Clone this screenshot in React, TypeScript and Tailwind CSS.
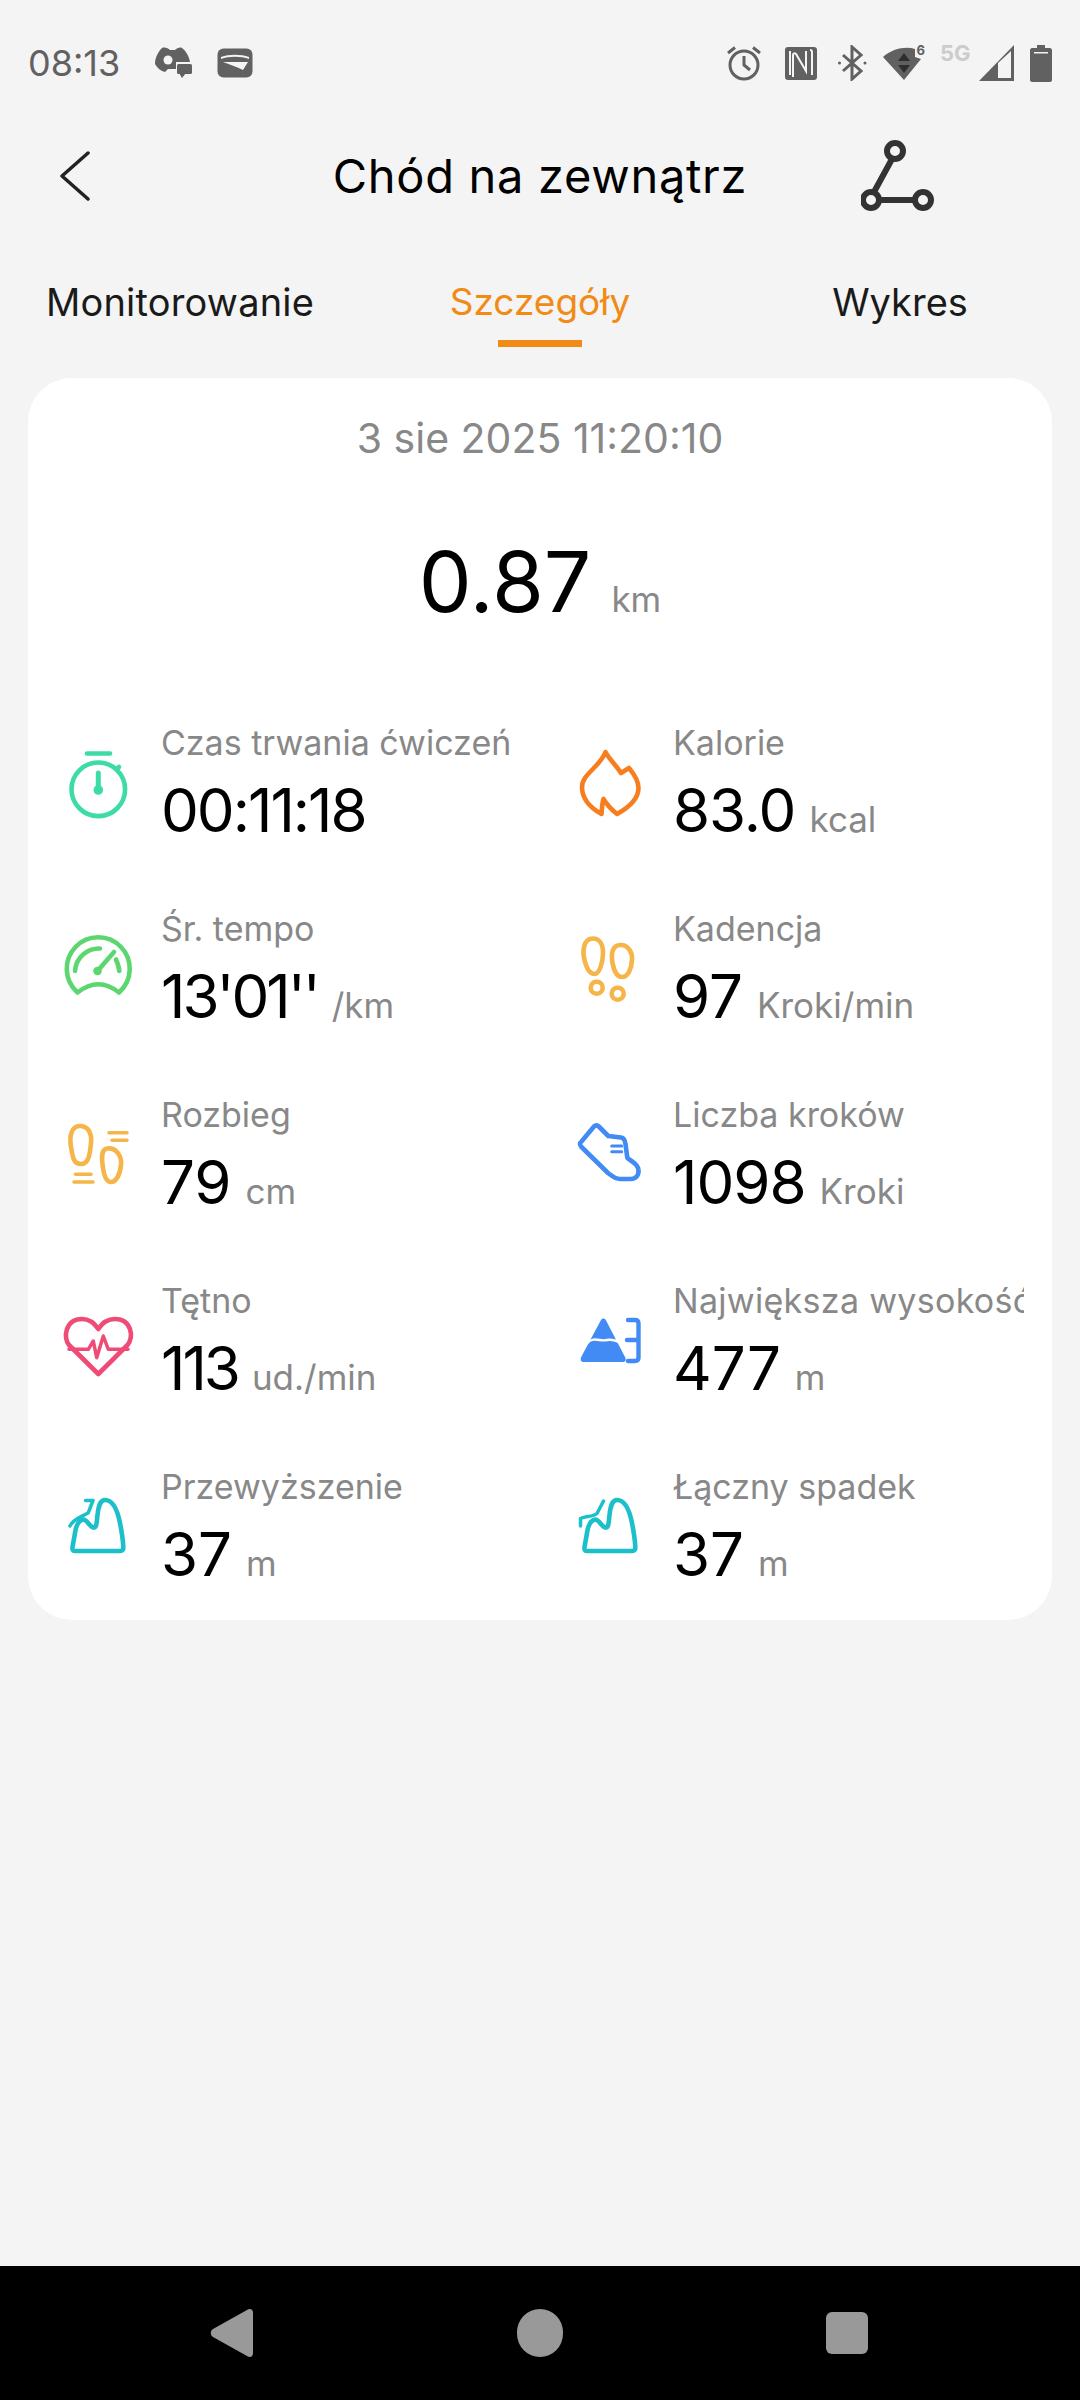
import type { ReactNode } from "react";

const FONT = "[font-family:Inter,'Noto_Sans',sans-serif]";

function Stroke({ color, children }: { color: string; children: ReactNode }) {
  return (
    <svg
      width="72"
      height="72"
      viewBox="0 0 72 72"
      fill="none"
      stroke={color}
      strokeWidth="4.6"
      strokeLinecap="round"
      strokeLinejoin="round"
      className="shrink-0"
    >
      {children}
    </svg>
  );
}

const Stopwatch = () => (
  <Stroke color="#3ddba6">
    <circle cx="36.3" cy="40.3" r="26.8" />
    <path d="M25 4.5H48" />
    <path d="M36.3 24V41" strokeWidth="5" />
    <circle cx="36.3" cy="41" r="2.5" fill="#3ddba6" />
    <path d="M55 20l2-2" />
  </Stroke>
);

const Gauge = () => (
  <Stroke color="#5cd66f">
    <path d="M15.5 57.5A31.5 31.5 0 1 1 57 57.5Q36.5 41 15.5 57.5Z" />
    <path d="M13 36C14 22 26 13 38 13.5" />
    <path d="M54 24.5C55.5 28 57 32 57.3 36" />
    <path d="M35.5 36L52 17" />
    <circle cx="35.5" cy="36" r="2" fill="#5cd66f" />
  </Stroke>
);

const Stride = () => (
  <Stroke color="#f6b549">
    <path d="M18 5C26 5 30 12 29 22C28 32 27 43 19 43C11 43 11 36 9 26C7 14 10 5 18 5Z" />
    <path d="M45 27.5C54 26 60 35 59 44C58 54 54 61 49 61C44 61 42 54 41 47C40 40 38 29 45 27.5Z" />
    <path d="M47 11.7H65M50 19.3H65M13.5 53.3H29M12 61H31" strokeWidth="3.5" />
  </Stroke>
);

const Flame = () => (
  <Stroke color="#f77e1f">
    <path d="M31.5 3C35 10 42 16 47 24L55 19C60 25 64.5 31 64.5 39C64.5 52 52 60 43 65C38 61 33 56 29.5 50C28 54 28 60 27.5 65C15 58 8 50 8 38C8 25 26 18 31.5 3Z" />
  </Stroke>
);

const Cadence = () => (
  <Stroke color="#f6b549">
    <path d="M19 3.5C26 3.5 29 10 29 18C29 26 26 38 21 39C15 39 13 33 11 27C8 17 9 3.5 19 3.5Z" />
    <path d="M46 10C54 9.5 58.5 17 58 25C57.5 34 54 42 48 42C42 42 40 35 38.5 28C37 19 38 10.5 46 10Z" />
    <circle cx="22.7" cy="52.7" r="6" />
    <circle cx="43.7" cy="58.7" r="6" />
  </Stroke>
);

const Shoe = () => (
  <Stroke color="#428bf5">
    <path d="M24.3 5L34.3 15L47 16.5C50 17 51 19 51.5 23L53.3 36.7C56 40 64 42 64.5 49C65 54 62 58 57 58H46C41 58 38 55 34 52L7.5 26C5.5 24 5.5 22 7.5 20.5L20 5.5C21.5 4 23 4 24.3 5Z" />
    <path d="M37.7 25H47.7M37.7 30.7H47.7" strokeWidth="3" />
  </Stroke>
);

const Heart = () => (
  <Stroke color="#ef4b77">
    <path d="M36.3 67L7 38C1 31 3 12 20 12C28 12 33 17 36.3 22C39.5 17 45 12 53 12C70 12 72 31 65.5 38Z" />
    <path d="M7 42.3H26.3L31.3 34L34.7 50.7L41.3 29L46.3 42.3H66" strokeWidth="3.5" />
  </Stroke>
);

const Mountain = () => (
  <path d="M13 58C10.5 58 10.3 56.5 10.5 54L13 40C14 33 17 27 21.5 26.5C25 26.5 27 33 31 34.5C35 35 34.5 30 35.5 22C36.5 13 38 7 43 7C50 7 55 15 58 30C60 40 61 48 61.3 54C61.5 57 60.5 58 58 58Z" />
);

const Ascent = () => (
  <Stroke color="#1cc0cb">
    <Mountain />
    <path d="M8 33C12 25 20 24 26.3 19.7L31 7.5M23.5 7.5H31" strokeWidth="3.5" />
  </Stroke>
);

const Descent = () => (
  <Stroke color="#1cc0cb">
    <Mountain />
    <path d="M29.5 8L23 20.5C19 24 12 23 6.5 25.5M6.5 25.5V33" strokeWidth="3.5" />
  </Stroke>
);

const Peak = () => (
  <svg width="72" height="72" viewBox="0 0 72 72" className="shrink-0">
    <path
      d="M27 13C28.3 11 30.5 11 31.8 13L51 50C52.5 53 51.5 55 48.5 55H10C7 55 6 53 7.2 50Z"
      fill="#428bf5"
    />
    <path d="M13 36C20 29 26 35 33 33C37 32 41 33 47 36" stroke="#fff" strokeWidth="2.5" fill="none" />
    <path
      d="M54 13H61C63.5 13 64.5 14 64.5 16.5V50.5C64.5 53 63.5 54 61 54H54M53 33H64"
      stroke="#428bf5"
      strokeWidth="4.4"
      strokeLinecap="round"
      fill="none"
    />
  </svg>
);

interface Metric {
  icon: ReactNode;
  label: string;
  value: string;
  unit?: string;
  labelClass?: string;
  valueClass?: string;
}

const metrics: Metric[] = [
  { icon: <Stopwatch />, label: "Czas trwania ćwiczeń", value: "00:11:18", valueClass: "tracking-[-2px]" },
  { icon: <Flame />, label: "Kalorie", value: "83.0", unit: "kcal", valueClass: "tracking-[-1px]" },
  { icon: <Gauge />, label: "Śr. tempo", value: "13'01''", unit: "/km", valueClass: "tracking-[-3px]" },
  { icon: <Cadence />, label: "Kadencja", value: "97", unit: "Kroki/min" },
  { icon: <Stride />, label: "Rozbieg", value: "79", unit: "cm" },
  { icon: <Shoe />, label: "Liczba kroków", value: "1098", unit: "Kroki", valueClass: "tracking-[-1px]" },
  { icon: <Heart />, label: "Tętno", value: "113", unit: "ud./min", valueClass: "tracking-[-3px]" },
  { icon: <Peak />, label: "Największa wysokość", value: "477", unit: "m", labelClass: "tracking-[0.3px]" },
  { icon: <Ascent />, label: "Przewyższenie", value: "37", unit: "m" },
  { icon: <Descent />, label: "Łączny spadek", value: "37", unit: "m" },
];

function StatusBar() {
  return (
    <div className="h-[126px] flex items-center justify-between pl-[28px] pr-[28px] text-[#616161]">
      <div className="flex items-center">
        <span className="text-[36px] leading-[40px] w-[127px]">08:13</span>
        {/* discord + chat badge */}
        <svg width="38" height="32" viewBox="0 0 38 32" fill="#616161">
          <path d="M7 1C10 0 13 1 15 3H20C22 1 25 0 27 1C31 4 34 9 35 15H21V22H13L10 25C6 24 2 21 0 17C0 11 3 5 7 1Z" />
          <circle cx="13" cy="13" r="4.5" fill="#f4f4f4" />
          <rect x="22" y="17" width="15" height="10" rx="1.5" />
          <path d="M24 26H31L27 31Z" />
        </svg>
        {/* wallet */}
        <svg width="36" height="30" viewBox="0 0 36 30" className="ml-[24px]">
          <rect x="0.5" y="0.5" width="35" height="29" rx="6" fill="#616161" />
          <path d="M4 11C12 8 24 8 32 11V9C24 6 12 6 4 9Z" fill="#f4f4f4" />
          <path d="M6 14H31L26 22C20 19 12 16 6 14Z" fill="#f4f4f4" />
        </svg>
      </div>
      <div className="flex items-center">
        {/* alarm */}
        <svg width="36" height="36" viewBox="0 0 36 36" fill="none" stroke="#616161" strokeWidth="3">
          <circle cx="18" cy="20" r="14" />
          <path d="M18 11V20L24 25" />
          <path d="M2 8L9 2.5M34 8L27 2.5" />
        </svg>
        {/* nfc */}
        <svg width="32" height="33" viewBox="0 0 32 33" className="ml-[23px]">
          <rect width="32" height="33" rx="3" fill="#616161" />
          <path
            d="M8 30V8C8 6 9.5 6 11 7L21 24V4M5 4V28M27 28V5C27 4 26 3 25 3"
            fill="none"
            stroke="#f4f4f4"
            strokeWidth="2"
          />
        </svg>
        {/* bluetooth */}
        <svg width="31" height="36" viewBox="0 0 31 36" fill="none" stroke="#616161" strokeWidth="3" className="ml-[20px]">
          <path d="M6 10L24 26L15 34V2L24 10L6 26" />
          <circle cx="2.5" cy="18" r="1.5" fill="#616161" stroke="none" />
          <circle cx="28" cy="18" r="1.5" fill="#616161" stroke="none" />
        </svg>
        {/* wifi 6 */}
        <div className="relative ml-[15px] w-[42px] h-[34px]">
          <svg width="42" height="34" viewBox="0 0 42 34">
            <path d="M0 11C9 3 22 0 32 3V11L38 13L21 34Z" fill="#616161" />
            <path d="M21 7L27 15H15ZM21 27L15 19H27Z" fill="#2e2e2e" />
          </svg>
          <span className="absolute right-0 top-[-3px] text-[13px] leading-[14px] font-bold">6</span>
        </div>
        <span className="ml-[15px] w-[32px] text-[22px] leading-[20px] font-bold text-[#cccccc] self-start mt-[-2px]">5G</span>
        {/* signal */}
        <svg width="35" height="36" viewBox="0 0 35 36" className="ml-[7px]">
          <path d="M0 36L35 0V36Z" fill="#616161" />
          <path d="M19 18L32 6V33H19Z" fill="#f4f4f4" />
        </svg>
        {/* battery */}
        <svg width="22" height="37" viewBox="0 0 22 37" className="ml-[16px]">
          <path d="M7 0H15V3H20C21 3 22 4 22 5V35C22 36 21 37 20 37H2C1 37 0 36 0 35V5C0 4 1 3 2 3H7Z" fill="#616161" />
          <rect x="4" y="7" width="14" height="1.5" fill="#f4f4f4" />
        </svg>
      </div>
    </div>
  );
}

function NavBar() {
  return (
    <div className="h-[100px] grid grid-cols-[280px_1fr_280px] items-center">
      <div className="pl-[60px]">
        <svg width="30" height="52" viewBox="0 0 30 52" fill="none" stroke="#222" strokeWidth="3.5" strokeLinecap="round" strokeLinejoin="round">
          <path d="M28 3L2 26L28 49" />
        </svg>
      </div>
      <h1 className="text-center text-[47px] leading-[56px] tracking-[0.7px] font-normal text-black whitespace-nowrap">Chód na zewnątrz</h1>
      <div className="pl-[61px]">
        <svg width="74" height="72" viewBox="0 0 74 72" fill="none" stroke="#333" strokeWidth="6">
          <circle cx="34" cy="11" r="8" />
          <circle cx="10" cy="60" r="8" />
          <circle cx="62" cy="60" r="8" />
          <path d="M31 19L13 52M18 60H54" />
        </svg>
      </div>
    </div>
  );
}

function Tabs() {
  return (
    <div className="grid grid-cols-3 pt-[51px]">
      <div className="flex flex-col items-center">
        <span className="text-[38px] leading-[50px] tracking-[0.2px] text-[#1a1a1a]">Monitorowanie</span>
      </div>
      <div className="flex flex-col items-center">
        <span className="text-[37px] leading-[50px] text-[#f28a16]">Szczegóły</span>
        <div className="mt-[13px] w-[84px] h-[7px] bg-[#f28a16]" />
      </div>
      <div className="flex flex-col items-center">
        <span className="text-[38px] leading-[50px] text-[#1a1a1a]">Wykres</span>
      </div>
    </div>
  );
}

function MetricCell({ metric }: { metric: Metric }) {
  return (
    <div className="flex items-center gap-[27px] min-w-0">
      {metric.icon}
      <div className="min-w-0 flex-1">
        <div className={`text-[34px] leading-[44px] text-[#888888] whitespace-nowrap overflow-hidden ${metric.labelClass ?? ""}`}>{metric.label}</div>
        <div className="flex items-baseline mt-[6px] whitespace-nowrap">
          <span className={`text-[60px] leading-[78px] text-black ${metric.valueClass ?? ""}`}>{metric.value}</span>
          {metric.unit && <span className="ml-[14px] text-[35px] text-[#888888]">{metric.unit}</span>}
        </div>
      </div>
    </div>
  );
}

export default function App() {
  return (
    <div className={`w-[1080px] h-[2400px] flex flex-col bg-[#f4f4f4] overflow-hidden ${FONT}`}>
      <StatusBar />
      <NavBar />
      <Tabs />

      <div className="mx-[28px] mt-[31px] h-[1242px] rounded-[44px] bg-white pt-[36px]">
        <div className="text-center text-[41px] leading-[48px] text-[#888888]">3 sie 2025 11:20:10</div>
        <div className="mt-[70px] flex items-baseline justify-center">
          <span className="text-[84px] leading-[100px] text-black">0.87</span>
          <span className="ml-[20px] text-[35px] text-[#888888]">km</span>
        </div>
        <div className="mt-[89px] grid grid-cols-[512px_450px] gap-y-[58px] pl-[34px]">
          {metrics.map((m) => (
            <MetricCell key={m.label} metric={m} />
          ))}
        </div>
      </div>

      <div className="flex-1" />

      {/* android nav */}
      <div className="h-[134px] bg-black flex items-center justify-center gap-[263px] pr-[2px]">
        <svg width="44" height="48" viewBox="0 0 44 48" fill="#999999">
          <path d="M37 1C40 -1 43 0 43 4V44C43 48 40 49 37 47L3 28C0 26 0 22 3 20Z" />
        </svg>
        <div className="w-[46px] h-[48px] rounded-full bg-[#999999]" />
        <div className="w-[42px] h-[42px] rounded-[6px] bg-[#999999]" />
      </div>
    </div>
  );
}
